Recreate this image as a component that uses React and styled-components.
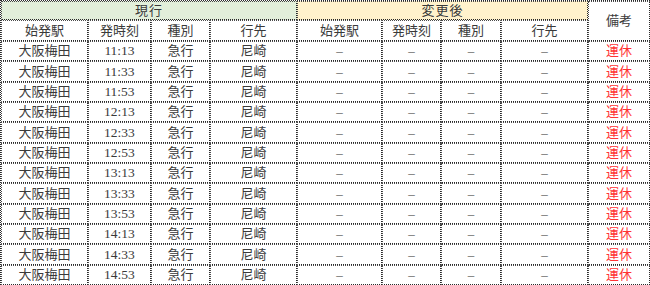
import React from 'react';
import styled, { createGlobalStyle } from 'styled-components';

const GlobalStyle = createGlobalStyle`
    html, body {
        margin: 0;
        padding: 0;
        background: #ffffff;
    }
`

const Table = styled.table`
    table-layout: fixed;
    width: 649px;
    border-collapse: separate;
    border-spacing: 0;
    border-left: 1px dotted #2a2a2a;
    border-top: 1px dotted #2a2a2a;
    font-family: "Liberation Serif", "Noto Sans CJK JP", serif;
    font-size: 13px;
    color: #3a3a3a;
`

const Cell = styled.td`
    height: ${props => props.h || 18}px;
    padding: 0;
    text-align: center;
    vertical-align: middle;
    font-weight: normal;
    line-height: 16px;
    border-right: 1px dotted #2a2a2a;
    border-bottom: 1px dotted #2a2a2a;
    border-left: 1px dotted #4a4a4a;
    border-top: 1px dotted #4a4a4a;
    white-space: nowrap;
    overflow: hidden;
    background: ${props => props.bg || '#ffffff'};
    color: ${props => props.red ? '#ff3333' : '#3a3a3a'};
`

const GroupCell = styled(Cell)`
    letter-spacing: 1px;
`

const Time = styled.span`
    font-size: 13.5px;
`

const Dash = styled.span`
    color: #555555;
`

const rows = [
    '11:13', '11:33', '11:53', '12:13', '12:33', '12:53',
    '13:13', '13:33', '13:53', '14:13', '14:33', '14:53',
]

const widths = [87, 63, 59, 87, 85, 59, 60, 87, 62]
const heads = ['始発駅', '発時刻', '種別', '行先']

function App() {
    return (
        <>
            <GlobalStyle />
            <Table>
                <colgroup>
                    {widths.map((w, i) => <col key={i} style={{ width: w }} />)}
                </colgroup>
                <thead>
                    <tr>
                        <GroupCell as="th" colSpan={4} h={17} bg="#e2efda">現行</GroupCell>
                        <GroupCell as="th" colSpan={4} h={17} bg="#fff2cc">変更後</GroupCell>
                        <Cell as="th" rowSpan={2}>備考</Cell>
                    </tr>
                    <tr>
                        {heads.concat(heads).map((h, i) => (
                            <Cell as="th" key={i} h={19}>{h}</Cell>
                        ))}
                    </tr>
                </thead>
                <tbody>
                    {rows.map((t, i) => {
                        const h = i % 3 === 1 ? 19 : 18
                        return (
                            <tr key={t}>
                                <Cell h={h}>大阪梅田</Cell>
                                <Cell h={h}><Time>{t}</Time></Cell>
                                <Cell h={h}>急行</Cell>
                                <Cell h={h}>尼崎</Cell>
                                <Cell h={h}><Dash>–</Dash></Cell>
                                <Cell h={h}><Dash>–</Dash></Cell>
                                <Cell h={h}><Dash>–</Dash></Cell>
                                <Cell h={h}><Dash>–</Dash></Cell>
                                <Cell h={h} red>運休</Cell>
                            </tr>
                        )
                    })}
                </tbody>
            </Table>
        </>
    );
}

export default App;
